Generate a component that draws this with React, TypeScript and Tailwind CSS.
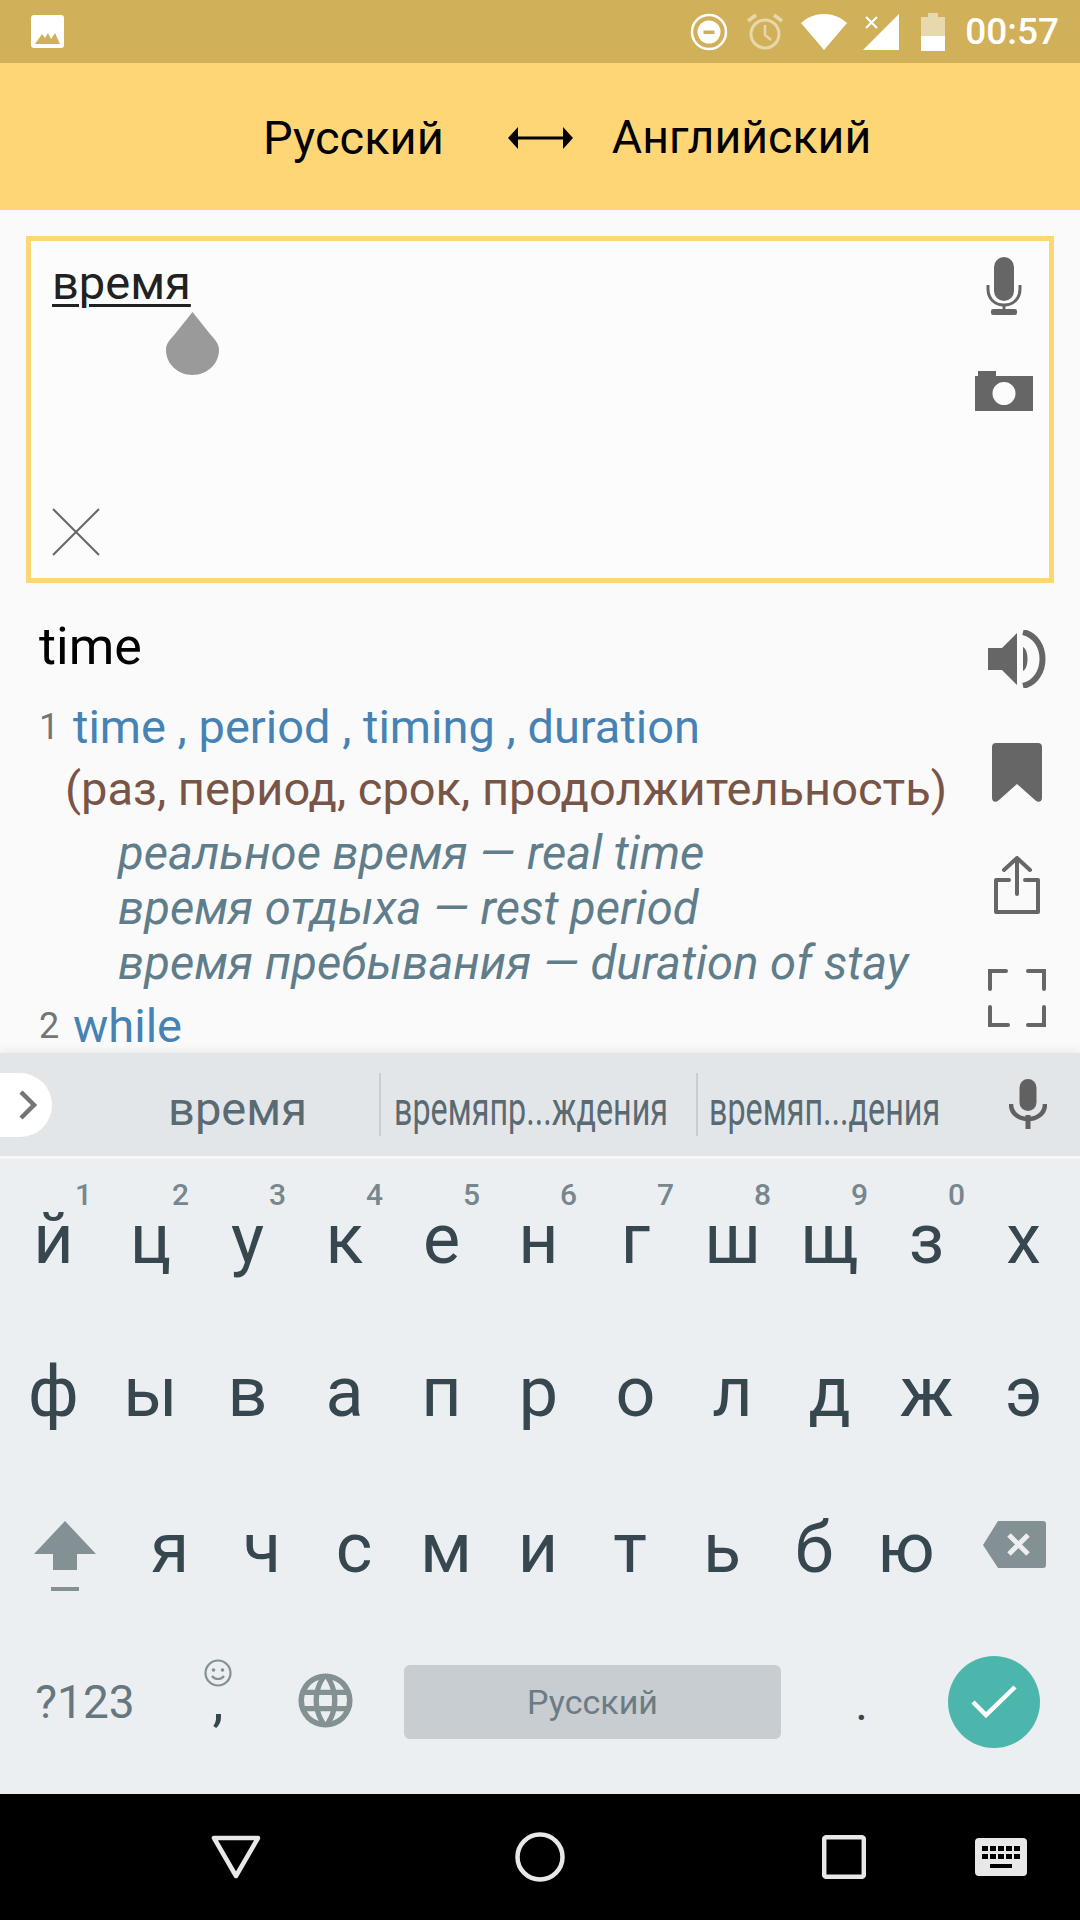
const ROW_ONE: [string, string][] = [
  ["й", "1"],
  ["ц", "2"],
  ["у", "3"],
  ["к", "4"],
  ["е", "5"],
  ["н", "6"],
  ["г", "7"],
  ["ш", "8"],
  ["щ", "9"],
  ["з", "0"],
  ["х", ""],
];
const ROW_TWO = ["ф", "ы", "в", "а", "п", "р", "о", "л", "д", "ж", "э"];
const ROW_THREE = ["я", "ч", "с", "м", "и", "т", "ь", "б", "ю"];
const EXAMPLES = [
  "реальное время — real time",
  "время отдыха — rest period",
  "время пребывания — duration of stay",
];

function StatusBar() {
  return (
    <div className="flex h-[63px] shrink-0 items-center bg-[#d1b05a] pl-[31px] pr-[21px] text-white">
      <svg width="33" height="33" viewBox="0 0 33 33">
        <path
          fillRule="evenodd"
          fill="#fff"
          d="M3 0h27a3 3 0 0 1 3 3v27a3 3 0 0 1-3 3H3a3 3 0 0 1-3-3V3a3 3 0 0 1 3-3zM4 29h25l-5-11-4 6-3-6-3 5-3-4z"
        />
      </svg>
      <div className="ml-auto flex items-center">
        <svg width="38" height="38" viewBox="0 0 38 38">
          <circle cx="19" cy="19" r="17" fill="none" stroke="#fff" strokeWidth="2.5" />
          <circle cx="19" cy="19" r="11.5" fill="#fff" />
          <rect x="13.5" y="17.5" width="11" height="3.5" fill="#d1b05a" />
        </svg>
        <svg className="ml-[18px] opacity-50" width="38" height="38" viewBox="0 0 38 38">
          <circle cx="19" cy="21" r="14" fill="none" stroke="#fff" strokeWidth="3" />
          <path d="M19 12v10l6 5" fill="none" stroke="#fff" strokeWidth="2.5" />
          <path d="M2 8l8-6M36 8l-8-6" fill="none" stroke="#fff" strokeWidth="3.5" />
        </svg>
        <svg className="ml-[17px]" width="46" height="36" viewBox="0 0 46 36">
          <path d="M0 9C13-3 33-3 46 9L23 36z" fill="#fff" />
        </svg>
        <svg className="ml-[16px]" width="36" height="36" viewBox="0 0 36 36">
          <path d="M36 0v36H0z" fill="#fff" />
          <path d="M3 3l11 11M14 3L3 14" fill="none" stroke="#fff" strokeWidth="2.2" />
        </svg>
        <svg className="ml-[22px]" width="24" height="38" viewBox="0 0 24 38">
          <path d="M0 4h7V0h10v4h7v21H0z" fill="#fff" opacity="0.5" />
          <path d="M0 23h24v15H0z" fill="#fff" />
        </svg>
        <span className="ml-[20px] font-['Roboto',sans-serif] text-[37px] font-medium leading-none">00:57</span>
      </div>
    </div>
  );
}

function LanguageBar() {
  return (
    <div className="flex h-[147px] shrink-0 items-center bg-[#ffd675] pl-[263px] pt-[2px] font-['Roboto',sans-serif] text-[47px] leading-none text-black">
      <span>Русский</span>
      <svg className="ml-[64px]" width="65" height="22" viewBox="0 0 65 22">
        <path d="M0 11L10 0v22zM65 11L55 0v22z" fill="#000" />
        <rect x="6" y="9.5" width="53" height="3" fill="#000" />
      </svg>
      <span className="ml-[39px] text-[46.5px]">Английский</span>
    </div>
  );
}

function InputBox() {
  return (
    <div className="relative mx-[26px] mt-[26px] flex h-[347px] shrink-0 justify-between border-[5px] border-[#ffd675] bg-[#fcfcfc] pl-[21px] pr-[16px]">
      <div className="flex flex-col items-start justify-between pb-[22px]">
        <span className="mt-[18px] font-['Roboto',sans-serif] text-[47px] leading-[48px] text-[#212121] underline decoration-[3px] underline-offset-[5px]">
          время
        </span>
        <svg width="48" height="48" viewBox="0 0 48 48">
          <path d="M1 1l46 46M47 1L1 47" fill="none" stroke="#666" strokeWidth="2" />
        </svg>
      </div>
      <div className="flex w-[58px] flex-col items-center pt-[16px]">
        <svg width="36" height="58" viewBox="0 0 36 58">
          <rect x="8" y="0" width="20" height="44" rx="10" fill="#666" />
          <path d="M2 28v4c0 10 7 16 16 16s16-6 16-16v-4" fill="none" stroke="#666" strokeWidth="3" />
          <path d="M18 48v5" stroke="#666" strokeWidth="3" />
          <rect x="5" y="52" width="26" height="6" rx="2" fill="#666" />
        </svg>
        <svg className="mt-[56px]" width="58" height="40" viewBox="0 0 58 40">
          <path
            fillRule="evenodd"
            fill="#666"
            d="M0 5h3V0h18v5h37v35H0zM29 11a11.500 11.500 0 1 0 0 23a11.500 11.500 0 1 0 0-23z"
          />
        </svg>
      </div>
      {/* text selection handle */}
      <svg className="absolute left-[135px] top-[71px]" width="53" height="63" viewBox="0 0 53 63">
        <path d="M26.500 0L9 22C4 28 0 31 0 38c0 14 12 25 26.500 25S53 52 53 38c0-7-4-10-9-16z" fill="#9a9a9a" />
      </svg>
    </div>
  );
}

function ResultIcons() {
  return (
    <div className="flex w-[126px] shrink-0 flex-col items-center pt-[47px]">
      <svg width="58" height="58" viewBox="0 0 58 58">
        <path d="M0 18h14L29 3v52L14 40H0z" fill="#666" />
        <path d="M35 17c6 3 6 21 0 24z" fill="#666" />
        <path d="M35 2c26 6 26 48 0 54" fill="none" stroke="#666" strokeWidth="6" />
      </svg>
      <svg className="mt-[55px]" width="50" height="59" viewBox="0 0 50 59">
        <path d="M4 0h42a4 4 0 0 1 4 4v51c0 4-4 5-7 2L25 41 7 57c-3 3-7 2-7-2V4a4 4 0 0 1 4-4z" fill="#666" />
      </svg>
      <svg className="mt-[54px]" width="46" height="58" viewBox="0 0 46 58">
        <path
          d="M15 24H2v32h42V24H31M23 38V3M10 14L23 2l13 12"
          fill="none"
          stroke="#666"
          strokeWidth="4"
          strokeLinecap="round"
          strokeLinejoin="round"
        />
      </svg>
      <svg className="mt-[55px]" width="58" height="58" viewBox="0 0 58 58">
        <path
          d="M18 2H2v18M40 2h16v18M2 38v18h18M56 38v18H40"
          fill="none"
          stroke="#666"
          strokeWidth="4"
          strokeLinecap="round"
        />
      </svg>
    </div>
  );
}

function Results() {
  return (
    <div className="flex min-h-0 flex-1 overflow-hidden font-['Roboto',sans-serif]">
      <div className="min-w-0 flex-1 pl-[39px]">
        <div className="mt-[34px] text-[52px] leading-[60px] text-black">time</div>
        <div className="mt-[20px] flex text-[47px] leading-[60px] text-[#4682b4]">
          <span className="w-[34px] text-[36px] text-[#757575]">1</span>
          <span>time , period , timing , duration</span>
        </div>
        <div className="ml-[26px] mt-[2px] whitespace-nowrap text-[47px] leading-[60px] text-[#795548]">
          (раз, период, срок, продолжительность)
        </div>
        <div className="ml-[79px] mt-[7px] whitespace-nowrap text-[47.2px] italic leading-[55px] text-[#607d8b]">
          {EXAMPLES.map((line) => (
            <div key={line}>{line}</div>
          ))}
        </div>
        <div className="mt-[5px] flex text-[47px] leading-[60px] text-[#4682b4]">
          <span className="w-[34px] text-[36px] text-[#757575]">2</span>
          <span>while</span>
        </div>
      </div>
      <ResultIcons />
    </div>
  );
}

function Suggestions() {
  return (
    <div className="relative z-10 flex h-[106px] shrink-0 items-center border-b-[3px] border-[#f5f7f8] bg-[#e3e6e9] font-['Roboto',sans-serif] text-[47px] leading-none text-[#5a6a73] shadow-[0_-4px_8px_rgba(0,0,0,0.05)]">
      <div className="flex h-[64px] w-[52px] shrink-0 items-center rounded-r-[32px] bg-white pl-[18px]">
        <svg width="20" height="32" viewBox="0 0 20 32">
          <path d="M3 3l13 13L3 29" fill="none" stroke="#757575" strokeWidth="4.500" />
        </svg>
      </div>
      <div className="w-[327px] pl-[44px] pt-[8px] text-center">время</div>
      <div className="h-[63px] w-[2px] bg-[#c8cdd1]" />
      <div className="w-[315px] pl-[13px] pt-[8px]">
        <span className="inline-block origin-left scale-x-[0.687] whitespace-nowrap">времяпр...ждения</span>
      </div>
      <div className="h-[63px] w-[2px] bg-[#c8cdd1]" />
      <div className="w-[311px] pl-[11px] pt-[8px]">
        <span className="inline-block origin-left scale-x-[0.687] whitespace-nowrap">времяп...дения</span>
      </div>
      <svg className="mb-[1px]" width="38" height="50" viewBox="0 0 38 50">
        <rect x="10.500" y="0" width="17" height="32" rx="8.500" fill="#616161" />
        <path d="M2 25c0 20 34 20 34 0" fill="none" stroke="#616161" strokeWidth="4.500" />
        <path d="M19 36v14" stroke="#616161" strokeWidth="5" />
      </svg>
    </div>
  );
}

function Keyboard() {
  return (
    <div className="flex h-[635px] shrink-0 flex-col bg-[#eceff1] font-['Roboto',sans-serif] text-[70px] leading-none text-[#37474f]">
      <div className="flex h-[153px] items-center px-[5px] pt-[7px]">
        {ROW_ONE.map(([letter, digit]) => (
          <div key={letter} className="relative flex h-full w-[97px] items-center justify-center">
            <span className="leading-[56px]">{letter}</span>
            {digit && (
              <span className="absolute left-[70px] top-[14px] text-[30px] font-medium text-[#78868e]">{digit}</span>
            )}
          </div>
        ))}
      </div>
      <div className="flex h-[155px] items-center px-[5px]">
        {ROW_TWO.map((letter) => (
          <div key={letter} className="mt-[5px] flex w-[97px] justify-center">
            {letter}
          </div>
        ))}
      </div>
      <div className="flex h-[155px] items-center">
        <div className="flex w-[124px] justify-center pl-[5px] pt-[22px]">
          <svg width="62" height="70" viewBox="0 0 62 70">
            <path d="M31 0l31 33H43v16H19V33H0z" fill="#839094" />
            <rect x="17" y="66" width="28" height="4" fill="#839094" />
          </svg>
        </div>
        {ROW_THREE.map((letter) => (
          <div key={letter} className="mt-[7px] flex w-[92px] justify-center">
            {letter}
          </div>
        ))}
        <div className="flex flex-1 justify-center pr-[3px]">
          <svg width="63" height="47" viewBox="0 0 63 47">
            <path d="M15 0h45a3 3 0 0 1 3 3v41a3 3 0 0 1-3 3H15L0 24z" fill="#839094" />
            <path d="M26 14l19 19M45 14L26 33" fill="none" stroke="#eceff1" strokeWidth="5" />
          </svg>
        </div>
      </div>
      <div className="flex h-[172px] items-start">
        <div className="mt-[57px] flex w-[170px] justify-center text-[46px] text-[#66777f]">?123</div>
        <div className="flex w-[96px] flex-col items-center pt-[37px]">
          <svg width="28" height="28" viewBox="0 0 28 28">
            <circle cx="14" cy="14" r="12.500" fill="none" stroke="#839094" strokeWidth="2.200" />
            <circle cx="9.500" cy="11" r="1.800" fill="#839094" />
            <circle cx="18.500" cy="11" r="1.800" fill="#839094" />
            <path d="M8 17c3 4 9 4 12 0" fill="none" stroke="#839094" strokeWidth="2.200" />
          </svg>
          <span className="mt-[-14px] text-[56px]">,</span>
        </div>
        <div className="mt-[46px] flex w-[138px] justify-center pr-[20px]">
          <svg width="65" height="65" viewBox="0 0 24 24">
            <path
              fill="#839094"
              d="M12 2a10 10 0 1 0 0 20a10 10 0 0 0 0-20zm6.900 6h-3a15.700 15.700 0 0 0-1.400-3.600A8 8 0 0 1 18.900 8zM12 4c.8 1.200 1.500 2.500 1.900 4h-3.800c.4-1.500 1.100-2.800 1.900-4zM4.300 14a8 8 0 0 1 0-4h3.400a16.500 16.500 0 0 0 0 4zm.8 2h3a15.700 15.700 0 0 0 1.400 3.600A8 8 0 0 1 5.100 16zm3-8h-3a8 8 0 0 1 4.400-3.600A15.700 15.700 0 0 0 8.100 8zM12 20c-.8-1.200-1.500-2.500-1.900-4h3.800c-.4 1.500-1.100 2.800-1.900 4zm2.300-6H9.700a14.700 14.700 0 0 1 0-4h4.600a14.700 14.700 0 0 1 0 4zm.2 5.600c.6-1.100 1.100-2.300 1.400-3.600h3a8 8 0 0 1-4.400 3.600zm1.800-5.600a16.500 16.500 0 0 0 0-4h3.400a8 8 0 0 1 0 4z"
            />
          </svg>
        </div>
        <div className="mt-[43px] flex h-[74px] w-[377px] items-center justify-center rounded-[6px] bg-[#c8cdd1] text-[34px] text-[#6c7c84]">
          Русский
        </div>
        <div className="mt-[58px] flex w-[167px] justify-center pr-[6px] text-[48px]">.</div>
        <div className="mt-[34px] flex h-[92px] w-[92px] items-center justify-center rounded-full bg-[#4db6ac]">
          <svg width="46" height="36" viewBox="0 0 46 36">
            <path d="M2 18l13 13L44 3" fill="none" stroke="#fff" strokeWidth="4.500" />
          </svg>
        </div>
      </div>
    </div>
  );
}

function NavBar() {
  return (
    <div className="flex h-[126px] shrink-0 items-center bg-black">
      <svg className="ml-[211px]" width="50" height="44" viewBox="0 0 50 44">
        <path d="M3 3h44L25 41z" fill="none" stroke="#e8e8e8" strokeWidth="4.500" strokeLinejoin="round" />
      </svg>
      <svg className="ml-[254px]" width="50" height="50" viewBox="0 0 50 50">
        <circle cx="25" cy="25" r="22.500" fill="none" stroke="#e8e8e8" strokeWidth="4.500" />
      </svg>
      <svg className="ml-[257px]" width="44" height="44" viewBox="0 0 44 44">
        <rect x="2.200" y="2.200" width="39.600" height="39.600" rx="2" fill="none" stroke="#e8e8e8" strokeWidth="4.500" />
      </svg>
      <svg className="ml-[109px]" width="52" height="38" viewBox="0 0 52 38">
        <rect width="52" height="38" rx="4" fill="#e8e8e8" />
        <path
          fill="#000"
          d="M7 8h6v5H7zM15 8h6v5h-6zM23 8h6v5h-6zM31 8h6v5h-6zM39 8h6v5h-6zM7 16h6v5H7zM15 16h6v5h-6zM23 16h6v5h-6zM31 16h6v5h-6zM39 16h6v5h-6zM15 26h22v4H15z"
        />
      </svg>
    </div>
  );
}

export default function App() {
  return (
    <div className="flex h-[1920px] w-[1080px] flex-col overflow-hidden bg-[#fafafa]">
      <StatusBar />
      <LanguageBar />
      <InputBox />
      <Results />
      <Suggestions />
      <Keyboard />
      <NavBar />
    </div>
  );
}
